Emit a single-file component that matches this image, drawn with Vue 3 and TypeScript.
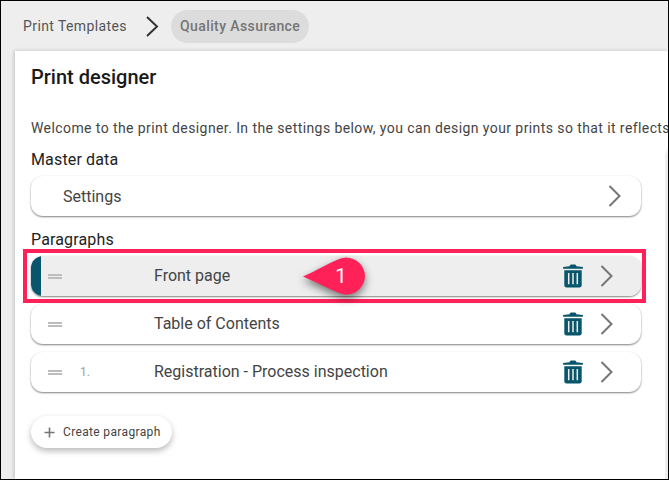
<script setup lang="ts">
interface Paragraph {
  title: string
  number?: string
  active?: boolean
}

const paragraphs: Paragraph[] = [
  { title: 'Front page', active: true },
  { title: 'Table of Contents' },
  { title: 'Registration - Process inspection', number: '1.' }
]
</script>

<template>
  <div class="page">
    <header class="crumbs">
      <span class="crumb">Print Templates</span>
      <svg class="crumb-sep" width="14" height="22" viewBox="0 0 14 22">
        <path d="M2 2l10 9.5L2 21" fill="none" stroke="#333" stroke-width="2" />
      </svg>
      <span class="crumb-current">Quality Assurance</span>
    </header>

    <main class="card">
      <h1 class="title">Print designer</h1>
      <p class="intro">Welcome to the print designer. In the settings below, you can design your prints so that it reflects</p>

      <h2 class="section">Master data</h2>
      <div class="row settings">
        <span class="settings-label">Settings</span>
        <svg class="chevron" width="13" height="22" viewBox="0 0 13 22">
          <path d="M1.500 1l10 10-10 10" fill="none" stroke="#757575" stroke-width="2" />
        </svg>
      </div>

      <h2 class="section section-gap">Paragraphs</h2>
      <div class="list">
        <div v-for="p in paragraphs" :key="p.title" class="row paragraph" :class="{ active: p.active }">
          <span class="drag"></span>
          <span class="number">{{ p.number }}</span>
          <span class="name">{{ p.title }}</span>
          <svg class="trash" width="22" height="24" viewBox="0 0 22 24">
            <path fill="#07566b" d="M7.500 2.200C7.800 1 8.600.5 9.600.5h2.800c1 0 1.800.5 2.100 1.700l6.400.9v1.700H1.100V3.100zM2.300 6.300h17.400v15c0 1.300-1 2.200-2.200 2.200h-13c-1.200 0-2.200-.9-2.200-2.200z" />
            <path stroke="#eee" stroke-width="1.500" d="M6.700 9v11.200M11 9v11.200M15.300 9v11.200" />
          </svg>
          <svg class="chevron" width="13" height="22" viewBox="0 0 13 22">
            <path d="M1.500 1l10 10-10 10" fill="none" stroke="#757575" stroke-width="2" />
          </svg>
        </div>
      </div>

      <button class="create" type="button">
        <svg width="11" height="11" viewBox="0 0 11 11">
          <path d="M5.500 0.500v10M0.500 5.500h10" stroke="#757575" stroke-width="1.600" />
        </svg>
        <span>Create paragraph</span>
      </button>
    </main>

    <!-- torn edge of the screenshot, then the annotation on top -->
    <div class="edge"></div>
    <div class="highlight"></div>
    <div class="callout">
      <svg width="62" height="40" viewBox="0 0 65 39">
        <path fill="#ff2158" d="M0 20C14 14 27 6 36 2.500C40 .8 43 0 45 0c11 0 20 8.800 20 19.500S56 39 45 39c-2 0-5-.8-9-2.500C27 33 14 26 0 20z" />
      </svg>
      <span class="callout-num">1</span>
    </div>
  </div>
</template>

<style>
html,
body {
  margin: 0;
  background: #fff;
}
</style>

<style scoped>
.page {
  position: relative;
  box-sizing: border-box;
  width: 669px;
  height: 480px;
  overflow: hidden;
  display: flex;
  flex-direction: column;
  border: 1px solid #000;
  background: #eee;
  font-family: Roboto, "Liberation Sans", sans-serif;
}

.crumbs {
  display: flex;
  align-items: center;
  height: 50px;
  flex: none;
  padding: 0 0 0 22px;
  box-sizing: border-box;
  font-size: 14px;
  letter-spacing: 0.4px;
}

.crumb {
  color: #555;
}

.crumb-sep {
  margin: 0 12px 0 18px;
}

.crumb-current {
  display: flex;
  align-items: center;
  height: 33px;
  padding: 0 9px;
  border-radius: 17px;
  background: #dcdcdc;
  color: #757575;
  font-weight: 500;
}

.card {
  flex: 1;
  min-height: 0;
  margin-left: 14px;
  padding: 0 0 0 16px;
  background: #fff;
  box-shadow: -1px 0 4px rgba(0, 0, 0, 0.2);
}

.title {
  margin: 0;
  padding-top: 15px;
  font-size: 20px;
  line-height: 22px;
  font-weight: 500;
  color: #1a1a1a;
}

.intro {
  margin: 31px 0 0;
  font-size: 14px;
  line-height: 18px;
  letter-spacing: 0.41px;
  color: #444;
  white-space: nowrap;
}

.section {
  margin: 14px 0 0;
  font-size: 16px;
  line-height: 18px;
  font-weight: 400;
  letter-spacing: 0.15px;
  color: #222;
}

.section-gap {
  margin-top: 15px;
}

.row {
  box-sizing: border-box;
  display: flex;
  align-items: center;
  width: 610px;
  height: 40px;
  border-radius: 12px;
  background: #fff;
  box-shadow: 0 1px 2px rgba(0, 0, 0, 0.5);
}

.settings {
  margin-top: 7px;
  padding-right: 20px;
}

.settings-label {
  margin-left: 32px;
  flex: 1;
  font-size: 16px;
  color: #444;
}

.list {
  display: flex;
  flex-direction: column;
  gap: 8px;
  margin-top: 7px;
}

.paragraph {
  padding-right: 28px;
}

.paragraph.active {
  background: linear-gradient(to right, #07566b 10px, #eee 10px);
}

.drag {
  width: 14px;
  height: 5px;
  margin-left: 17px;
  border-top: 2px solid #bdbdbd;
  border-bottom: 2px solid #bdbdbd;
  box-sizing: border-box;
}

.number {
  width: 12px;
  margin-left: 18px;
  font-size: 12px;
  color: #9e9e9e;
}

.name {
  margin-left: 62px;
  margin-bottom: 2px;
  flex: 1;
  font-size: 16px;
  color: #444;
}

.trash {
  margin-right: 16px;
}

.create {
  display: flex;
  align-items: center;
  gap: 8px;
  height: 32px;
  margin-top: 24px;
  padding: 0 11px 0 13px;
  border: 0;
  border-radius: 16px;
  background: #fff;
  box-shadow: 0 3px 6px rgba(0, 0, 0, 0.28);
  font-family: inherit;
  font-size: 12px;
  letter-spacing: 0.35px;
  color: #444;
}

.edge {
  position: absolute;
  right: 0;
  top: 146px;
  bottom: 0;
  width: 3px;
  background: #eee;
  clip-path: polygon(100% 0, 100% 100%, 0 100%, 0 8px);
}

.highlight {
  position: absolute;
  left: 22px;
  top: 248px;
  width: 615px;
  height: 46px;
  border: 4px solid #ff2158;
}

.callout {
  position: absolute;
  left: 302px;
  top: 255px;
  width: 62px;
  height: 40px;
  filter: drop-shadow(0 4px 4px rgba(0, 0, 0, 0.5));
}

.callout svg {
  display: block;
}

.callout-num {
  position: absolute;
  left: 31px;
  top: 8px;
  width: 14px;
  text-align: center;
  font-size: 21px;
  line-height: 24px;
  font-weight: 400;
  color: #fff;
}
</style>
